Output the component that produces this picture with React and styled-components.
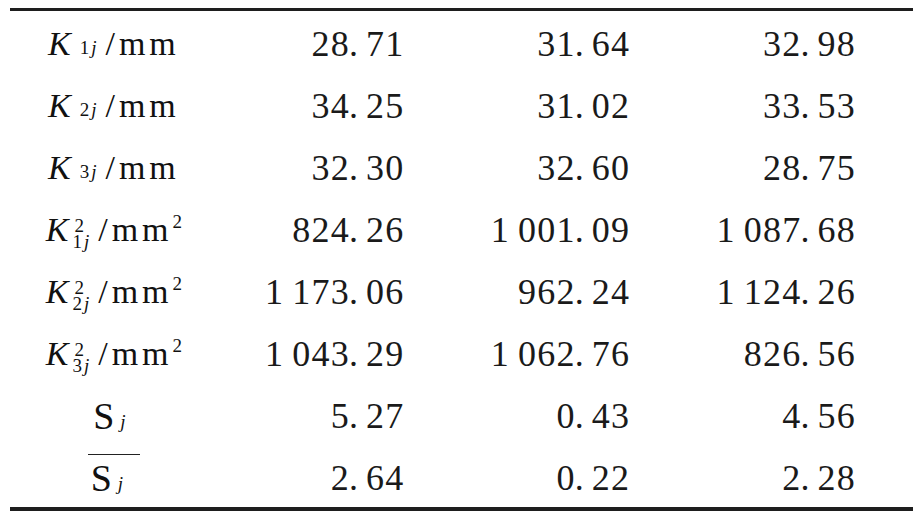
import React from 'react';
import styled, { createGlobalStyle } from 'styled-components';

const GlobalStyle = createGlobalStyle`
  body {
    margin: 0;
    background: #fff;
    color: #111;
  }
`;

const Table = styled.div`
  margin: 8px 0 0 10px;
  width: 903px;
  border-top: 3px solid #1e1e1e;
  border-bottom: 4px solid #1e1e1e;
  display: grid;
  grid-template-columns: repeat(4, 1fr);
  grid-auto-rows: 62px;
  font-family: "Liberation Serif", "Times New Roman", serif;
`;

const LabelCell = styled.div`
  display: flex;
  align-items: center;
  justify-content: center;
  padding-right: 18px;
  padding-top: 4px;
  font-size: 34px;
  line-height: 1;
  white-space: nowrap;
`;

const NumCell = styled.div`
  display: flex;
  align-items: center;
  justify-content: flex-end;
  padding-right: 57px;
  padding-top: 3px;
  font-size: 36px;
  letter-spacing: 1.2px;
  line-height: 1;
  white-space: nowrap;
  color: #1a1a1a;
`;

const Dot = styled.span`
  margin-left: -1px;
  margin-right: 7px;
`;

const Thin = styled.span`
  display: inline-block;
  width: 8px;
`;

const Sym = styled.span`
  font-style: ${(p) => (p.italic ? 'italic' : 'normal')};
  font-size: ${(p) => p.size || 34}px;
`;

const Scripts = styled.span`
  display: inline-flex;
  flex-direction: column;
  align-items: flex-start;
  font-size: 19px;
  line-height: 16px;
  margin-left: ${(p) => p.gap}px;
  margin-right: 7px;
  position: relative;
  top: ${(p) => p.drop || 4}px;
`;

const Sup = styled.span`
  visibility: ${(p) => (p.hidden ? 'hidden' : 'visible')};
  padding-left: 2px;
`;

const Sub = styled.span`
  letter-spacing: 2px;
`;

const J = styled.i`
  font-style: italic;
`;

const Unit = styled.span`
  letter-spacing: 4px;
`;

const UnitSup = styled.span`
  font-size: 19px;
  position: relative;
  top: -9px;
  letter-spacing: 0;
`;

const BarWrap = styled.span`
  display: inline-flex;
  align-items: center;
  border-top: 1.5px solid #222;
  padding: 4px 8px 0 3px;
  margin-top: -6px;
`;

const rows = [
  { k: '1', sq: false, vals: ['28.71', '31.64', '32.98'] },
  { k: '2', sq: false, vals: ['34.25', '31.02', '33.53'] },
  { k: '3', sq: false, vals: ['32.30', '32.60', '28.75'] },
  { k: '1', sq: true, vals: ['824.26', '1 001.09', '1 087.68'] },
  { k: '2', sq: true, vals: ['1 173.06', '962.24', '1 124.26'] },
  { k: '3', sq: true, vals: ['1 043.29', '1 062.76', '826.56'] },
  { s: 'plain', vals: ['5.27', '0.43', '4.56'] },
  { s: 'bar', vals: ['2.64', '0.22', '2.28'] },
];

function Num({ value }) {
  const [intPart, dec] = value.split('.');
  const groups = intPart.split(' ');
  return (
    <NumCell>
      {groups.map((g, i) => (
        <React.Fragment key={i}>
          {i > 0 && <Thin />}
          {g}
        </React.Fragment>
      ))}
      <Dot>.</Dot>
      {dec}
    </NumCell>
  );
}

function KLabel({ k, sq }) {
  return (
    <LabelCell>
      <Sym italic>K</Sym>
      <Scripts gap={sq ? 4 : 9}>
        <Sup hidden={!sq}>2</Sup>
        <Sub>
          {k}
          <J>j</J>
        </Sub>
      </Scripts>
      <Unit>/mm</Unit>
      {sq && <UnitSup>2</UnitSup>}
    </LabelCell>
  );
}

function SLabel({ bar }) {
  const inner = (
    <>
      <Sym size={38}>S</Sym>
      <Scripts gap={6} drop={6}>
        <Sup hidden>2</Sup>
        <Sub>
          <J>j</J>
        </Sub>
      </Scripts>
    </>
  );
  return <LabelCell>{bar ? <BarWrap>{inner}</BarWrap> : inner}</LabelCell>;
}

export default function App() {
  return (
    <>
      <GlobalStyle />
      <Table>
        {rows.map((r, i) => (
          <React.Fragment key={i}>
            {r.s ? <SLabel bar={r.s === 'bar'} /> : <KLabel k={r.k} sq={r.sq} />}
            {r.vals.map((v, j) => (
              <Num key={j} value={v} />
            ))}
          </React.Fragment>
        ))}
      </Table>
    </>
  );
}
